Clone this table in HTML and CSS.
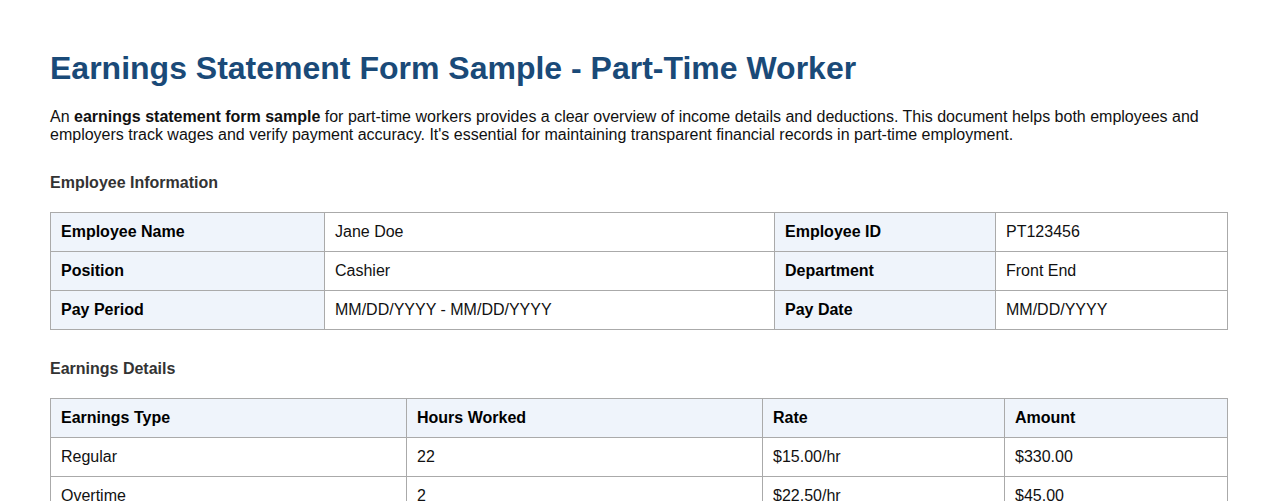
FILE: index.html
```html
<!DOCTYPE html>
<html lang="en">
<head>
<meta charset="utf-8">
<title>Earnings Statement Form Sample - Part-Time Worker</title>
<link rel="stylesheet" href="styles.css">
</head>
<body>
<div class="page">
  <h1 class="title">Earnings Statement Form Sample - Part-Time Worker</h1>
  <p class="intro">An <strong>earnings statement form sample</strong> for part-time workers provides a clear overview of income details and deductions. This document helps both employees and employers track wages and verify payment accuracy. It's essential for maintaining transparent financial records in part-time employment.</p>

  <h2 class="section-title">Employee Information</h2>
  <table class="grid info">
    <tr><th>Employee Name</th><td>Jane Doe</td><th>Employee ID</th><td>PT123456</td></tr>
    <tr><th>Position</th><td>Cashier</td><th>Department</th><td>Front End</td></tr>
    <tr><th>Pay Period</th><td>MM/DD/YYYY - MM/DD/YYYY</td><th>Pay Date</th><td>MM/DD/YYYY</td></tr>
  </table>

  <h2 class="section-title">Earnings Details</h2>
  <table class="grid earnings">
    <tr><th>Earnings Type</th><th>Hours Worked</th><th>Rate</th><th>Amount</th></tr>
    <tr><td>Regular</td><td>22</td><td>$15.00/hr</td><td>$330.00</td></tr>
    <tr><td>Overtime</td><td>2</td><td>$22.50/hr</td><td>$45.00</td></tr>
  </table>
</div>
</body>
</html>
```
FILE: styles.css
```css
html, body {
  margin: 0;
  padding: 0;
  background: #ffffff;
}
body {
  font-family: "Liberation Sans", Arial, sans-serif;
  font-size: 16px;
  color: #111;
}
.page {
  padding: 40px 50px;
}
.title {
  font-size: 32px;
  font-weight: bold;
  color: #1a4a78;
  margin: 10px 0 21px;
  line-height: 37px;
}
.intro {
  margin: 0 0 30px;
  line-height: 18px;
}
.section-title {
  font-size: 16px;
  font-weight: bold;
  color: #333;
  margin: 0 0 20px;
  line-height: 18px;
}
.grid {
  width: 100%;
  border-collapse: collapse;
  margin-bottom: 30px;
}
.grid th, .grid td {
  border: 1px solid #aaa;
  padding: 10px;
  text-align: left;
  line-height: 18px;
  vertical-align: middle;
}
.grid th {
  background: #eff4fb;
  font-weight: bold;
  color: #000;
}
.grid td {
  color: #111;
}
.info th:nth-child(1) { width: 253px; }
.info td:nth-child(2) { width: 429px; }
.info th:nth-child(3) { width: 200px; }
.earnings th:nth-child(1) { width: 335px; }
.earnings th:nth-child(2) { width: 335px; }
.earnings th:nth-child(3) { width: 221px; }
```
